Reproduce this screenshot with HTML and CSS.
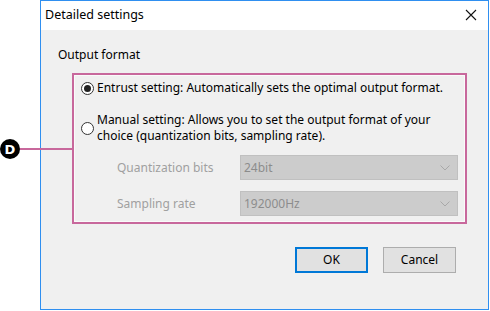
FILE: index.html
```html
<!DOCTYPE html>
<html>
<head>
<meta charset="utf-8">
<link rel="stylesheet" href="styles.css">
</head>
<body>
<div class="stage">
  <div class="window">
    <div class="titlebar">
      <span class="title">Detailed settings</span>
      <svg class="close" width="12" height="12" viewBox="0 0 12 12"><path d="M1 1 L11 11 M11 1 L1 11" stroke="#111" stroke-width="1.1" fill="none"/></svg>
    </div>
    <div class="content">
      <div class="section-label">Output format</div>
      <div class="group">
        <div class="radio-row first">
          <span class="radio checked"></span>
          <span class="radio-text">Entrust setting: Automatically sets the optimal output format.</span>
        </div>
        <div class="radio-row second">
          <span class="radio"></span>
          <span class="radio-text">Manual setting: Allows you to set the output format of your<br>choice (quantization bits, sampling rate).</span>
        </div>
        <div class="field-row">
          <span class="field-label">Quantization bits</span>
          <div class="combo"><span>24bit</span><svg width="10" height="6" viewBox="0 0 10 6"><path d="M0.5 0.5 L5 5 L9.5 0.5" stroke="#a8a8a8" fill="none"/></svg></div>
        </div>
        <div class="field-row">
          <span class="field-label">Sampling rate</span>
          <div class="combo"><span>192000Hz</span><svg width="10" height="6" viewBox="0 0 10 6"><path d="M0.5 0.5 L5 5 L9.5 0.5" stroke="#a8a8a8" fill="none"/></svg></div>
        </div>
      </div>
      <div class="buttons">
        <div class="btn default">OK</div>
        <div class="btn">Cancel</div>
      </div>
    </div>
  </div>
  <div class="callout"><span class="badge">D</span><span class="leader"></span></div>
</div>
</body>
</html>
```
FILE: styles.css
```css
* { box-sizing: border-box; }
html, body { margin: 0; padding: 0; background: #fff; }
body { width: 490px; height: 311px; overflow: hidden; font-family: "Noto Sans", sans-serif; font-size: 12px; color: #000; }
.stage { position: relative; width: 490px; height: 311px; }
.window {
  margin-left: 40px;
  width: 449px;
  height: 310px;
  border: 1px solid #2f8ff0;
  background: #f0f0f0;
  display: flex;
  flex-direction: column;
}
.titlebar {
  height: 29px;
  background: #fff;
  display: flex;
  align-items: center;
  justify-content: space-between;
  padding: 0 11px 0 4px;
}
.title { font-size: 12.5px; line-height: 16px; margin-top: -1px; }
.close { display: block; margin-top: -1px; }
.content { flex: 1; padding-left: 17px; display: flex; flex-direction: column; border-top: 1px solid #f0f0f0; }
.section-label { margin-top: 16px; line-height: 16px; }
.group {
  margin-top: 10px;
  margin-left: 14px;
  width: 395px;
  height: 151px;
  border: 2px solid #c8689c;
  box-shadow: inset 1px 1px 0 #fafafa, inset -1px -1px 0 #fafafa;
  padding: 5px 0 0 7px;
  display: flex;
  flex-direction: column;
}
.radio-row { display: flex; align-items: center; line-height: 16px; }
.radio-row.second { margin-top: 16px; }
.radio {
  width: 13px; height: 13px; border-radius: 50%;
  border: 1px solid #333; background: #fff;
  margin-right: 3px; flex: none; position: relative;
}
.radio.checked::after {
  content: ""; position: absolute; left: 2px; top: 2px;
  width: 7px; height: 7px; border-radius: 50%; background: #222;
}
.field-row { display: flex; align-items: center; margin-left: 36px; line-height: 16px; }
.field-row:nth-of-type(3) { margin-top: 11px; }
.field-row + .field-row { margin-top: 11px; }
.field-label { width: 123px; color: #a0a0a0; }
.combo {
  width: 218px; height: 25px;
  background: #cccccc;
  border: 1px solid #c0c0c0;
  display: flex; align-items: center; justify-content: space-between;
  padding: 0 7px 0 3px; color: #8c8c8c;
}
.buttons { display: flex; justify-content: flex-end; gap: 15px; margin-top: 23px; margin-right: 32px; }
.btn {
  width: 73px; height: 26px; background: #e1e1e1; border: 1px solid #adadad;
  display: flex; align-items: center; justify-content: center; line-height: 16px;
}
.btn.default { border: 2px solid #0078d7; }
.callout { position: absolute; left: 0; top: 139px; display: flex; align-items: center; }
.badge {
  width: 20px; height: 20px; border-radius: 50%; background: #000; color: #fff;
  font-family: "DejaVu Sans", sans-serif; font-weight: bold; font-size: 13px;
  display: flex; align-items: center; justify-content: center; line-height: 1;
}
.leader { width: 52px; height: 2px; background: #c8689c; }
```
